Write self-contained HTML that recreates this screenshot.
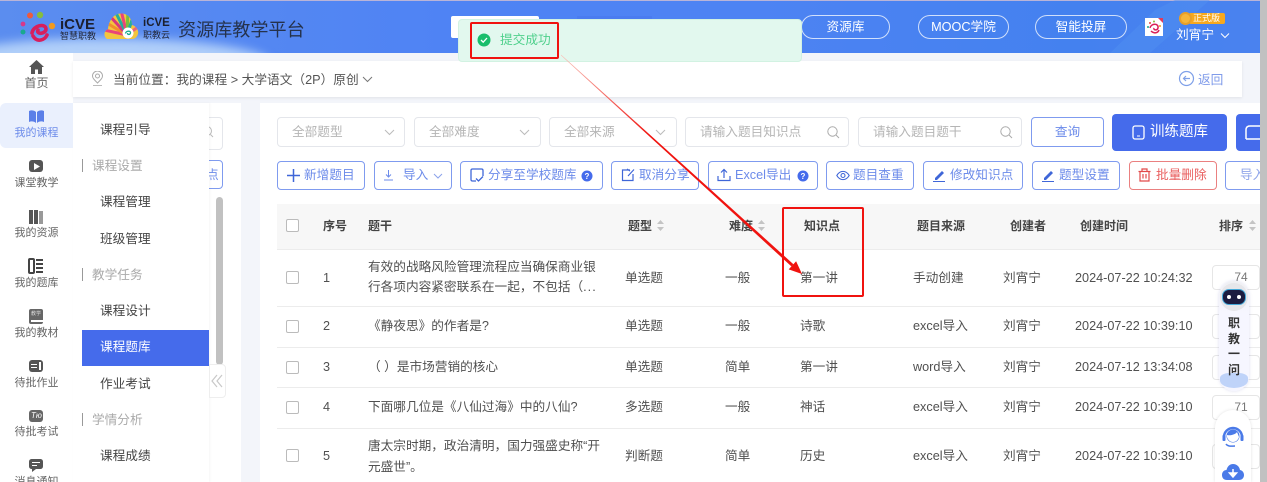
<!DOCTYPE html>
<html lang="zh"><head><meta charset="utf-8"><title>资源库教学平台</title>
<style>
*{box-sizing:border-box}
html,body{margin:0;padding:0;width:1267px;height:482px;overflow:hidden;background:#f3f5fa}
body{position:relative;font-family:"Liberation Sans","Noto Sans CJK SC",sans-serif;color:#505050;font-size:12.67px}
.a{position:absolute}
.t{position:absolute;white-space:nowrap;line-height:18px}
.nav{position:absolute;left:0;width:73px;text-align:center;font-size:11px;line-height:14px;color:#666}
.sm{position:absolute;left:100px;line-height:18px;color:#444;white-space:nowrap}
.sh{position:absolute;left:92px;line-height:18px;color:#aaa;white-space:nowrap}
.sh:before{content:"";position:absolute;left:-10px;top:2px;width:1px;height:13px;background:#999}
.sel{position:absolute;top:117px;height:30px;background:#fff;border:1px solid #e4e6eb;border-radius:4px;color:#b5b5b5;line-height:28px;padding-left:14px;white-space:nowrap}
.btn{position:absolute;top:161px;height:29px;background:#fff;border:1px solid #7f9bef;border-radius:4px;color:#6c8bea;line-height:27px;white-space:nowrap}
.btn span{position:absolute;top:0}
.btn svg{position:absolute}
.cb{position:absolute;left:286px;width:13px;height:13px;border:1px solid #bbb;border-radius:2px;background:#fff}
.th{position:absolute;top:218px;font-weight:bold;color:#444;font-size:12px;line-height:16px;white-space:nowrap}
.line{position:absolute;left:277px;width:983px;height:1px;background:#ececec}
.sort{position:absolute;width:7px;height:11px}
.in{position:absolute;left:1212px;width:48px;height:25px;border:1px solid #e6e6e6;border-radius:4px;background:#fff;color:#777;font-size:12px;line-height:23px;text-align:center;padding-left:10px}
.pill{position:absolute;top:15px;height:24px;border:1px solid rgba(255,255,255,.75);border-radius:12px;color:#fff;text-align:center;line-height:22px;white-space:nowrap}
.rb{position:absolute;left:1228px;font-size:12px;line-height:16px;color:#333;font-weight:bold}
</style></head><body>

<!-- header -->
<div class="a" style="left:0;top:0;width:1267px;height:53px;background:linear-gradient(90deg,#5b8def 0,#4f83f4 35%,#4d83f3 60%,#4481ef 85%,#4a82ef 100%);overflow:hidden">
  <div class="a" style="left:0;top:0;width:1267px;height:1px;background:#b9b4d8"></div>
  <div class="a" style="left:-60px;top:38px;width:330px;height:50px;border-radius:50%;background:rgba(205,230,252,.75);filter:blur(5px)"></div>
  <div class="a" style="left:577px;top:16px;width:75px;height:37px;background:#4a7cf0"></div>
  <svg class="a" style="left:1110px;top:0" width="157" height="53"><path d="M0 53 L45 10 L65 0 H100 L40 53Z" fill="#5090f2" opacity=".5"/></svg>
</div>

<!-- logos -->
<svg class="a" style="left:0;top:0" width="180" height="53">
  <defs>
    <clipPath id="shell"><path d="M107 39 C103 36 104 31 108 29 C109 20 114 13 122 13.500 C129 14 132 20 132 25 C136 26 139 30 138 34 C137 37 135 39 132 39Z"/></clipPath>
  </defs>
  <circle cx="30" cy="15.500" r="3" fill="#ef5a3c"/><circle cx="40" cy="15" r="3.200" fill="#86bd3d"/>
  <circle cx="23" cy="24" r="2.400" fill="#d6388a"/><circle cx="23" cy="32" r="2.500" fill="#19a98f"/>
  <circle cx="52" cy="26" r="3.200" fill="#f29a1f"/>
  <path d="M32 33 C33 25 46 23 46 29 C46 34 36 35 38 30 M33 36 C37 43 45 40 47 35" fill="none" stroke="#d81f5c" stroke-width="3.600" stroke-linecap="round"/>
  <g clip-path="url(#shell)">
    <rect x="100" y="10" width="42" height="32" fill="#f3c53e"/>
    <path d="M127 35L104 30" stroke="#e9447a" stroke-width="3"/>
    <path d="M127 35L105 22" stroke="#f28c2e" stroke-width="3"/>
    <path d="M127 35L109 15" stroke="#d8367c" stroke-width="3"/>
    <path d="M127 35L115 11" stroke="#26ae9c" stroke-width="3"/>
    <path d="M127 35L121 10" stroke="#e9447a" stroke-width="3"/>
    <path d="M127 35L128 10" stroke="#7bbd3c" stroke-width="3"/>
    <path d="M127 35L134 14" stroke="#26ae9c" stroke-width="3"/>
    <path d="M127 35L142 24" stroke="#e9647a" stroke-width="3"/>
  </g>
  <circle cx="128" cy="33" r="5.500" fill="#fff"/>
  <path d="M125.500 33.500C126 30.500 131 30.500 130.500 33C130 35 127.500 35 127.500 33" fill="none" stroke="#19a98f" stroke-width="1.300"/>
</svg>
<div class="t" style="left:60px;top:17px;font-weight:bold;font-size:15px;line-height:15px;color:#1b1f2e">iCVE</div>
<div class="t" style="left:60px;top:31px;font-size:9px;line-height:11px;color:#242a3c">智慧职教</div>
<div class="t" style="left:143px;top:17px;font-weight:bold;font-size:11.500px;line-height:12px;color:#1b1f2e">iCVE</div>
<div class="t" style="left:143px;top:30px;font-size:9px;line-height:10px;color:#242a3c">职教云</div>
<div class="t" style="left:178px;top:18px;font-size:18.100px;line-height:24px;color:#25324c;">资源库教学平台</div>

<!-- header right -->
<div class="a" style="left:451px;top:16px;width:88px;height:22px;background:#fff;border-radius:2px"></div>
<div class="pill" style="left:801px;width:89px;font-size:12.700px">资源库</div>
<div class="pill" style="left:918px;width:91px;font-size:12.700px">MOOC学院</div>
<div class="pill" style="left:1035px;width:92px;font-size:12.700px">智能投屏</div>
<div class="a" style="left:1145px;top:18px;width:18px;height:18px;background:#fff"></div>
<svg class="a" style="left:1145px;top:18px" width="18" height="18"><path d="M5 10 C6 5 14 5 13 10 C12 13 8 12 9 10 M6 13 C9 16 13 15 14 12" fill="none" stroke="#d91f58" stroke-width="1.500"/><circle cx="5" cy="5" r="1" fill="#e8413a"/><circle cx="9" cy="3.500" r="1" fill="#86bd3d"/><circle cx="3" cy="9" r="1" fill="#19a98f"/><circle cx="15" cy="8" r="1" fill="#f29a1f"/><path d="M13 0H18V5Z" fill="#e23b5a"/></svg>
<div class="a" style="left:1189px;top:13px;width:36px;height:11px;background:#f7a81c;border-radius:2px"></div>
<div class="a" style="left:1179px;top:12px;width:13px;height:13px;background:#f5b53a;border-radius:50%;border:2px solid #e89f28"></div>
<div class="t" style="left:1193px;top:13px;font-size:9px;line-height:11px;color:#fff">正式版</div>
<div class="t" style="left:1176px;top:26px;font-size:12.700px;color:#fff">刘宵宁</div>
<svg class="a" style="left:1220px;top:32px" width="10" height="7"><path d="M1 1.500 L5 5.500 L9 1.500" fill="none" stroke="#fff" stroke-width="1"/></svg>

<!-- left nav -->
<div class="a" style="left:0;top:53px;width:73px;height:429px;background:#fff"></div>
<div class="a" style="left:0;top:103px;width:73px;height:45px;background:#eaf0fd;border-radius:6px 0 0 6px"></div>
<svg class="a" style="left:29px;top:60px" width="15" height="15"><path d="M7.500 0 L15 7 H13 V14 H9 V9.500 H6 V14 H2 V7 H0Z" fill="#555"/></svg>
<div class="nav" style="top:76px;font-size:12px">首页</div>
<svg class="a" style="left:28px;top:110px" width="17" height="13"><path d="M8 2 C6 0 3 0 1 1 V12 C3 11 6 11 8 13Z M9 2 C11 0 14 0 16 1 V12 C14 11 11 11 9 13Z" fill="#5b7fe8"/></svg>
<div class="nav" style="top:126px;color:#6c8bea">我的课程</div>
<div class="a" style="left:29px;top:160px;width:14px;height:12px;background:#555;border-radius:3px"></div>
<svg class="a" style="left:34px;top:163px" width="6" height="7"><path d="M0 0L6 3.500L0 7Z" fill="#fff"/></svg>
<div class="nav" style="top:176px">课堂教学</div>
<svg class="a" style="left:29px;top:210px" width="14" height="14"><rect x="0" y="0" width="4" height="14" fill="#555"/><rect x="5" y="0" width="4" height="14" fill="#555"/><rect x="10" y="1" width="4" height="13" fill="#999"/></svg>
<div class="nav" style="top:226px">我的资源</div>
<svg class="a" style="left:28px;top:258px" width="16" height="16"><rect x="1" y="1" width="5" height="14" rx="1" fill="none" stroke="#444" stroke-width="2"/><path d="M8 2H15M8 6H15M8 10H15M8 14H15" stroke="#444" stroke-width="2"/></svg>
<div class="nav" style="top:276px">我的题库</div>
<div class="a" style="left:29px;top:309px;width:14px;height:15px;background:#666;border-radius:2px"></div>
<div class="a" style="left:31px;top:320px;width:12px;height:2px;background:#fff"></div>
<div class="t" style="left:31px;top:311px;font-size:5px;line-height:7px;color:#ddd">教学</div>
<div class="nav" style="top:326px">我的教材</div>
<div class="a" style="left:29px;top:360px;width:14px;height:12px;background:#555;border-radius:3px"></div>
<div class="a" style="left:31px;top:364px;width:6px;height:1px;background:#fff"></div>
<div class="a" style="left:31px;top:367px;width:6px;height:1px;background:#fff"></div>
<div class="a" style="left:39px;top:362px;width:2px;height:8px;background:#fff"></div>
<div class="nav" style="top:376px">待批作业</div>
<div class="a" style="left:29px;top:410px;width:14px;height:12px;background:#666;border-radius:3px"></div>
<div class="t" style="left:31px;top:410px;font-size:8px;line-height:12px;color:#fff;font-style:italic">Tю</div>
<div class="nav" style="top:425px">待批考试</div>
<svg class="a" style="left:29px;top:459px" width="14" height="13"><path d="M3 0H11C13 0 14 1 14 3V7C14 9 13 10 11 10H7L3 13V10C1 10 0 9 0 7V3C0 1 1 0 3 0Z" fill="#555"/><path d="M3 3.500H11M3 6.500H8" stroke="#fff"/></svg>
<div class="nav" style="top:475px">消息通知</div>

<!-- breadcrumb -->
<div class="a" style="left:73px;top:61px;width:1169px;height:36px;background:#fff;box-shadow:0 1px 3px rgba(0,0,0,.08)"></div>
<svg class="a" style="left:91px;top:71px" width="14" height="16"><path d="M6.500 12 C3 8.500 1.500 7 1.500 5 A5 5 0 0 1 11.500 5 C11.500 7 10 8.500 6.500 12Z" fill="none" stroke="#aaa"/><circle cx="6.500" cy="5" r="2" fill="none" stroke="#aaa"/><path d="M2 14.500H11" stroke="#bbb"/></svg>
<div class="t" style="left:113px;top:71px;color:#555;font-size:12.700px">当前位置：我的课程 &gt; 大学语文（2P）原创</div>
<svg class="a" style="left:362px;top:76px" width="11" height="7"><path d="M1 1 L5.500 5.500 L10 1" fill="none" stroke="#777"/></svg>
<svg class="a" style="left:1178px;top:70px" width="17" height="17"><circle cx="8.500" cy="8.500" r="7" fill="none" stroke="#7fa0e8" stroke-width="1.200"/><path d="M12 8.500H5.500M8 6L5.500 8.500L8 11" fill="none" stroke="#7fa0e8" stroke-width="1.200"/></svg>
<div class="t" style="left:1198px;top:71px;color:#7f9bea;font-size:12.700px">返回</div>

<!-- content backgrounds -->
<div class="a" style="left:209px;top:103px;width:32px;height:379px;background:#fff"></div>
<div class="a" style="left:260px;top:103px;width:1000px;height:379px;background:#fff"></div>
<!-- partial tree column -->
<div class="a" style="left:190px;top:117px;width:33px;height:33px;border:1px solid #e4e6eb;border-radius:4px;background:#fff"></div>
<svg class="a" style="left:202px;top:125px" width="12" height="13"><circle cx="5" cy="6" r="4.500" fill="none" stroke="#bbb"/><path d="M8.500 9.500L11 12" stroke="#bbb"/></svg>
<div class="a" style="left:190px;top:160px;width:33px;height:29px;border:1px solid #7f9bef;border-radius:4px;background:#fff"></div>
<div class="t" style="left:206px;top:166px;color:#6c8bea">点</div>
<div class="a" style="left:216px;top:197px;width:7px;height:168px;background:#c1c1c1;border-radius:4px"></div>

<!-- submenu -->
<div class="a" style="left:73px;top:103px;width:136px;height:379px;background:#fff;box-shadow:1px 0 2px rgba(0,0,0,.04)"></div>
<div class="sm" style="top:121px">课程引导</div>
<div class="sh" style="top:157px">课程设置</div>
<div class="sm" style="top:193px">课程管理</div>
<div class="sm" style="top:230px">班级管理</div>
<div class="sh" style="top:266px">教学任务</div>
<div class="sm" style="top:302px">课程设计</div>
<div class="a" style="left:82px;top:330px;width:127px;height:36px;background:#456beb"></div>
<div class="sm" style="top:338px;color:#fff">课程题库</div>
<div class="sm" style="top:375px">作业考试</div>
<div class="sh" style="top:411px">学情分析</div>
<div class="sm" style="top:447px">课程成绩</div>
<div class="a" style="left:209px;top:364px;width:17px;height:34px;background:#fff;border:1px solid #eee;border-radius:0 4px 4px 0"></div>
<svg class="a" style="left:211px;top:374px" width="12" height="14"><path d="M6 1L1 7L6 13M11 1L6 7L11 13" fill="none" stroke="#c8c8c8" stroke-width="1.200"/></svg>

<!-- filters -->
<div class="sel" style="left:277px;width:128px">全部题型<svg class="a" style="left:106px;top:11px" width="11" height="7"><path d="M1 1L5.500 5.500L10 1" fill="none" stroke="#bbb"/></svg></div>
<div class="sel" style="left:414px;width:127px">全部难度<svg class="a" style="left:104px;top:11px" width="11" height="7"><path d="M1 1L5.500 5.500L10 1" fill="none" stroke="#bbb"/></svg></div>
<div class="sel" style="left:549px;width:128px">全部来源<svg class="a" style="left:105px;top:11px" width="11" height="7"><path d="M1 1L5.500 5.500L10 1" fill="none" stroke="#bbb"/></svg></div>
<div class="sel" style="left:685px;width:164px">请输入题目知识点<svg class="a" style="left:141px;top:8px" width="13" height="13"><circle cx="5.500" cy="5.500" r="4.700" fill="none" stroke="#aaa"/><path d="M9 9L12 12" stroke="#aaa"/></svg></div>
<div class="sel" style="left:858px;width:164px">请输入题目题干<svg class="a" style="left:141px;top:8px" width="13" height="13"><circle cx="5.500" cy="5.500" r="4.700" fill="none" stroke="#aaa"/><path d="M9 9L12 12" stroke="#aaa"/></svg></div>
<div class="a" style="left:1031px;top:117px;width:73px;height:30px;border:1px solid #7f9bef;border-radius:4px;background:#fff;color:#6c8bea;text-align:center;line-height:28px">查询</div>
<div class="a" style="left:1112px;top:114px;width:115px;height:37px;background:#456beb;border-radius:4px;color:#fff;font-size:14.500px;line-height:37px;padding-left:38px">训练题库</div>
<svg class="a" style="left:1132px;top:125px" width="13" height="15"><rect x="1" y="1" width="11" height="13" rx="2" fill="none" stroke="#fff" stroke-width="1.300"/><path d="M5 11H8" stroke="#fff"/></svg>
<div class="a" style="left:1236px;top:114px;width:24px;height:37px;background:#456beb;border-radius:4px 0 0 4px"></div>
<svg class="a" style="left:1245px;top:125px" width="15" height="15"><path d="M1 14L1 5Q1 1 5 1H15M1 14H15" fill="none" stroke="#fff" stroke-width="1.500"/></svg>

<!-- action buttons -->
<div class="btn" style="left:277px;width:88px"><svg style="left:9px;top:7px" width="13" height="13"><path d="M6.500 0V13M0 6.500H13" stroke="#3f66d8" stroke-width="1.500"/></svg><span style="left:26px">新增题目</span></div>
<div class="btn" style="left:374px;width:78px"><svg style="left:8px;top:7px" width="11" height="13"><path d="M5.500 1V7.500M3 5.500L5.500 8L8 5.500M1 11H10" fill="none" stroke="#6c8bea"/></svg><span style="left:28px">导入</span><svg style="left:58px;top:11px" width="10" height="6"><path d="M1 1L5 5L9 1" fill="none" stroke="#8ba2ea"/></svg></div>
<div class="btn" style="left:460px;width:143px"><svg style="left:9px;top:6px" width="14" height="15"><path d="M6 13H2.500C1.500 13 1 12.500 1 11.500V2.500C1 1.500 1.500 1 2.500 1H11.500C12.500 1 13 1.500 13 2.500V8" fill="none" stroke="#3f66d8" stroke-width="1.300"/><path d="M6 10.500L8.500 13L13 8.500" fill="none" stroke="#3f66d8" stroke-width="1.300"/></svg><span style="left:27px">分享至学校题库</span><svg style="left:120px;top:8px" width="12" height="12"><circle cx="6" cy="6" r="5.500" fill="#456beb"/><text x="6" y="9" font-size="8" font-weight="bold" text-anchor="middle" fill="#fff" font-family="Liberation Sans">?</text></svg></div>
<div class="btn" style="left:611px;width:88px"><svg style="left:9px;top:6px" width="14" height="14"><path d="M9 2H1.500V12.500H12V6M7 8L13 1.500M9 3L6 1" fill="none" stroke="#3f66d8" stroke-width="1.200"/></svg><span style="left:27px">取消分享</span></div>
<div class="btn" style="left:708px;width:110px"><svg style="left:8px;top:6px" width="14" height="14"><path d="M7 10V1.500M4 4.500L7 1.500L10 4.500M1 8V12.500H13V8" fill="none" stroke="#3f66d8" stroke-width="1.200"/></svg><span style="left:26px">Excel导出</span><svg style="left:88px;top:8px" width="12" height="12"><circle cx="6" cy="6" r="5.500" fill="#456beb"/><text x="6" y="9" font-size="8" font-weight="bold" text-anchor="middle" fill="#fff" font-family="Liberation Sans">?</text></svg></div>
<div class="btn" style="left:826px;width:88px"><svg style="left:9px;top:8px" width="14" height="11"><path d="M0.800 5.500C4 0 10 0 13.200 5.500C10 11 4 11 0.800 5.500Z" fill="none" stroke="#3f66d8" stroke-width="1.100"/><circle cx="7" cy="5.500" r="2" fill="none" stroke="#3f66d8" stroke-width="1.100"/></svg><span style="left:26px">题目查重</span></div>
<div class="btn" style="left:923px;width:100px"><svg style="left:9px;top:7px" width="13" height="13"><path d="M2 9L9 2L11 4L4 11H2Z" fill="#3f66d8"/><path d="M0 12.500H12" stroke="#3f66d8"/></svg><span style="left:26px">修改知识点</span></div>
<div class="btn" style="left:1032px;width:88px"><svg style="left:9px;top:7px" width="13" height="13"><path d="M2 9L9 2L11 4L4 11H2Z" fill="#3f66d8"/><path d="M0 12.500H12" stroke="#3f66d8"/></svg><span style="left:26px">题型设置</span></div>
<div class="btn" style="left:1129px;width:88px;border-color:#ea8080;color:#e96060"><svg style="left:8px;top:6px" width="13" height="14"><path d="M0.500 3.500H12.500M4 3.500V1H9V3.500M2 3.500V13H11V3.500M5 6V10.500M8 6V10.500" fill="none" stroke="#e24a4a" stroke-width="1.200"/></svg><span style="left:26px">批量删除</span></div>
<div class="btn" style="left:1225px;width:50px"><span style="left:14px;color:#8fa5ea">导入</span></div>

<!-- table header -->
<div class="a" style="left:277px;top:204px;width:983px;height:46px;background:#f7f7f7"></div>
<div class="cb" style="top:219px"></div>
<div class="th" style="left:323px">序号</div>
<div class="th" style="left:368px">题干</div>
<div class="th" style="left:628px">题型</div>
<div class="th" style="left:729px">难度</div>
<div class="th" style="left:804px">知识点</div>
<div class="th" style="left:917px">题目来源</div>
<div class="th" style="left:1010px">创建者</div>
<div class="th" style="left:1080px">创建时间</div>
<div class="th" style="left:1219px">排序</div>
<svg class="sort" style="left:657px;top:220px"><path d="M3.500 0L7 4H0ZM3.500 11L0 7H7Z" fill="#c4c4c4"/></svg>
<svg class="sort" style="left:758px;top:220px"><path d="M3.500 0L7 4H0ZM3.500 11L0 7H7Z" fill="#c4c4c4"/></svg>
<svg class="sort" style="left:1249px;top:220px"><path d="M3.500 0L7 4H0ZM3.500 11L0 7H7Z" fill="#c4c4c4"/></svg>
<div class="line" style="top:249px"></div>
<div class="line" style="top:306px"></div>
<div class="line" style="top:347px"></div>
<div class="line" style="top:387px"></div>
<div class="line" style="top:428px"></div>

<!-- row 1 -->
<div class="cb" style="top:271px"></div>
<div class="t" style="left:323px;top:269px">1</div>
<div class="t" style="left:368px;top:258px">有效的战略风险管理流程应当确保商业银</div>
<div class="t" style="left:368px;top:278px">行各项内容紧密联系在一起，不包括（<span style="letter-spacing:1px">...</span></div>
<div class="t" style="left:625px;top:269px">单选题</div>
<div class="t" style="left:725px;top:269px">一般</div>
<div class="t" style="left:800px;top:269px">第一讲</div>
<div class="t" style="left:913px;top:269px">手动创建</div>
<div class="t" style="left:1003px;top:269px">刘宵宁</div>
<div class="t" style="left:1075px;top:269px">2024-07-22 10:24:32</div>
<div class="in" style="top:265px">74</div>
<!-- row 2 -->
<div class="cb" style="top:320px"></div>
<div class="t" style="left:323px;top:317px">2</div>
<div class="t" style="left:368px;top:317px">《静夜思》的作者是?</div>
<div class="t" style="left:625px;top:317px">单选题</div>
<div class="t" style="left:725px;top:317px">一般</div>
<div class="t" style="left:800px;top:317px">诗歌</div>
<div class="t" style="left:913px;top:317px">excel导入</div>
<div class="t" style="left:1003px;top:317px">刘宵宁</div>
<div class="t" style="left:1075px;top:317px">2024-07-22 10:39:10</div>
<div class="in" style="top:314px"></div>
<!-- row 3 -->
<div class="cb" style="top:361px"></div>
<div class="t" style="left:323px;top:358px">3</div>
<div class="t" style="left:368px;top:358px">（ ）是市场营销的核心</div>
<div class="t" style="left:625px;top:358px">单选题</div>
<div class="t" style="left:725px;top:358px">简单</div>
<div class="t" style="left:800px;top:358px">第一讲</div>
<div class="t" style="left:913px;top:358px">word导入</div>
<div class="t" style="left:1003px;top:358px">刘宵宁</div>
<div class="t" style="left:1075px;top:358px">2024-07-12 13:34:08</div>
<div class="in" style="top:355px"></div>
<!-- row 4 -->
<div class="cb" style="top:401px"></div>
<div class="t" style="left:323px;top:398px">4</div>
<div class="t" style="left:368px;top:398px">下面哪几位是《八仙过海》中的八仙?</div>
<div class="t" style="left:625px;top:398px">多选题</div>
<div class="t" style="left:725px;top:398px">一般</div>
<div class="t" style="left:800px;top:398px">神话</div>
<div class="t" style="left:913px;top:398px">excel导入</div>
<div class="t" style="left:1003px;top:398px">刘宵宁</div>
<div class="t" style="left:1075px;top:398px">2024-07-22 10:39:10</div>
<div class="in" style="top:395px">71</div>
<!-- row 5 -->
<div class="cb" style="top:449px"></div>
<div class="t" style="left:323px;top:447px">5</div>
<div class="t" style="left:368px;top:437px">唐太宗时期，政治清明，国力强盛史称“开</div>
<div class="t" style="left:368px;top:458px">元盛世”。</div>
<div class="t" style="left:625px;top:447px">判断题</div>
<div class="t" style="left:725px;top:447px">简单</div>
<div class="t" style="left:800px;top:447px">历史</div>
<div class="t" style="left:913px;top:447px">excel导入</div>
<div class="t" style="left:1003px;top:447px">刘宵宁</div>
<div class="t" style="left:1075px;top:447px">2024-07-22 10:39:10</div>
<div class="in" style="top:444px"></div>

<!-- robot widget -->
<div class="a" style="left:1219px;top:281px;width:30px;height:110px;background:linear-gradient(#f0f0f3,#f6f6ff 30%);border-radius:15px;box-shadow:0 0 3px rgba(120,120,200,.25)"></div>
<div class="a" style="left:1220px;top:283px;width:28px;height:28px;background:#e6e6ea;border-radius:50%"></div>
<div class="a" style="left:1222px;top:289px;width:24px;height:16px;background:#1c1c40;border-radius:7px;border:1px solid #46a8d8"></div>
<div class="a" style="left:1227px;top:295px;width:4px;height:4px;background:#fff;border-radius:50%"></div>
<div class="a" style="left:1237px;top:295px;width:4px;height:4px;background:#fff;border-radius:50%"></div>
<div class="a" style="left:1220px;top:373px;width:28px;height:15px;background:#b5cdf8;opacity:.85;border-radius:40% 40% 60% 60%"></div>
<div class="rb" style="top:315px">职</div>
<div class="rb" style="top:331px">教</div>
<div class="rb" style="top:346px">一</div>
<div class="rb" style="top:362px">问</div>

<div class="a" style="left:1215px;top:410px;width:36px;height:72px;background:#fff;border-radius:18px 18px 0 0;box-shadow:0 0 3px rgba(0,0,0,.12)"></div>
<svg class="a" style="left:1222px;top:426px" width="22" height="22"><path d="M2 11A9 9 0 0 1 20 11" fill="none" stroke="#4a7ae8" stroke-width="2.500"/><circle cx="11" cy="10" r="6.500" fill="#4a7ae8"/><path d="M5 9C9 10 14 8 15 6L17 11C16 14 14 16 11 16C8 16 6 14 5 11Z" fill="#fff"/><rect x="0.500" y="9" width="3" height="6" rx="1" fill="#4a7ae8"/><rect x="18.500" y="9" width="3" height="6" rx="1" fill="#4a7ae8"/><path d="M4 18C6 21 10 20 13 20" fill="none" stroke="#4a7ae8" stroke-width="1.500"/></svg>
<svg class="a" style="left:1222px;top:463px" width="22" height="19"><path d="M5 17C1 17 0 14 0 12C0 9 2 7 4.500 7C5.500 3 8 1 11 1C15 1 17.500 4 18 7C20.500 7.500 22 9.500 22 12C22 15 20 17 17 17Z" fill="#4a7ae8"/><path d="M11 6V12M7.500 10L11 14L14.500 10Z" stroke="#fff" stroke-width="1.500" fill="#fff"/></svg>

<!-- scrollbar -->
<div class="a" style="left:1260px;top:0;width:7px;height:482px;background:#c1c1c1"></div>

<!-- toast -->
<div class="a" style="left:458px;top:19px;width:344px;height:43px;background:#e2f8ee;border:1px solid #d2f2e2;border-radius:4px"></div>
<svg class="a" style="left:477px;top:33px" width="14" height="14"><circle cx="7" cy="7" r="6.500" fill="#19be6b"/><path d="M4 7L6.200 9.200L10 5" fill="none" stroke="#fff" stroke-width="1.300"/></svg>
<div class="t" style="left:500px;top:31px;color:#4fd08c;font-size:12.700px">提交成功</div>

<!-- annotations -->
<div class="a" style="left:470px;top:22px;width:89px;height:37px;border:2px solid #f0130f;border-radius:2px"></div>
<div class="a" style="left:782px;top:207px;width:82px;height:90px;border:2px solid #f0130f;border-radius:2px"></div>
<svg class="a" style="left:0;top:0" width="1267" height="482">
  <defs><linearGradient id="g" gradientUnits="userSpaceOnUse" x1="561" y1="55" x2="650" y2="136"><stop offset="0" stop-color="#f9c4bb"/><stop offset="1" stop-color="#f0130f"/></linearGradient></defs>
  <path d="M560.800 55.300 L561.200 54.700 L793.400 264.200 L791.400 266.400Z" fill="url(#g)"/>
  <path d="M802 274 L788.700 269.400 L796.100 261.200Z" fill="#f0130f"/>
</svg>
</body></html>
